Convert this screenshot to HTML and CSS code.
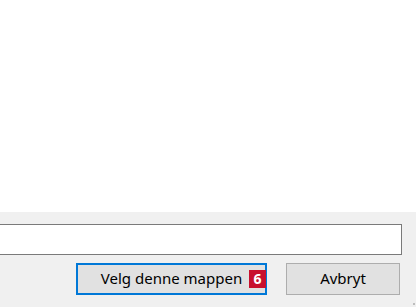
FILE: index.html
```html
<!DOCTYPE html>
<html lang="no">
<head>
  <meta charset="UTF-8" />
  <meta name="viewport" content="width=device-width, initial-scale=1.0"/>
  <title>Velg mappe</title>
  <link rel="stylesheet" href="styles.css">
</head>
<body>

  <div class="content"></div>

  <div class="footer">
    <input class="path" type="text" value="" />
    <div class="actions">
      <button class="btn primary">Velg denne mappen<span class="badge">6</span></button>
      <button class="btn">Avbryt</button>
    </div>
    <span class="grip"></span>
  </div>

</body>
</html>
```

FILE: styles.css
```css
body {
  margin: 0;
  background: #fff;
  font-family: "Noto Sans", "Liberation Sans", sans-serif;
  height: 307px;
  overflow: hidden;
  display: flex;
  flex-direction: column;
}

.content {
  height: 212px;
  background: #fff;
}

.footer {
  flex: 1;
  position: relative;
  background: #f0f0f0;
  padding: 12px 14px 0 0;
  display: flex;
  flex-direction: column;
  gap: 8px;
}

.path {
  box-sizing: border-box;
  height: 31px;
  margin: 0 0 0 -10px;
  border: 1px solid #7a7a7a;
  background: #fff;
  outline: none;
}

.actions {
  display: flex;
  justify-content: flex-end;
  gap: 19px;
  padding-right: 2px;
}

.btn {
  box-sizing: border-box;
  position: relative;
  width: 114px;
  height: 32px;
  padding: 0 0 2px;
  font-family: inherit;
  font-size: 15px;
  color: #000;
  background: #e1e1e1;
  border: 1px solid #adadad;
  border-radius: 0;
}

.primary {
  width: 191px;
  border: 2px solid #0078d7;
}

.badge {
  position: absolute;
  top: 5px;
  right: -1px;
  width: 17px;
  height: 18px;
  background: #c8102e;
  color: #fff;
  font-size: 14px;
  font-weight: bold;
  line-height: 18px;
  text-align: center;
}

.grip {
  position: absolute;
  right: 1px;
  bottom: 2px;
  width: 2px;
  height: 2px;
  background: #bdbdbd;
}
```
